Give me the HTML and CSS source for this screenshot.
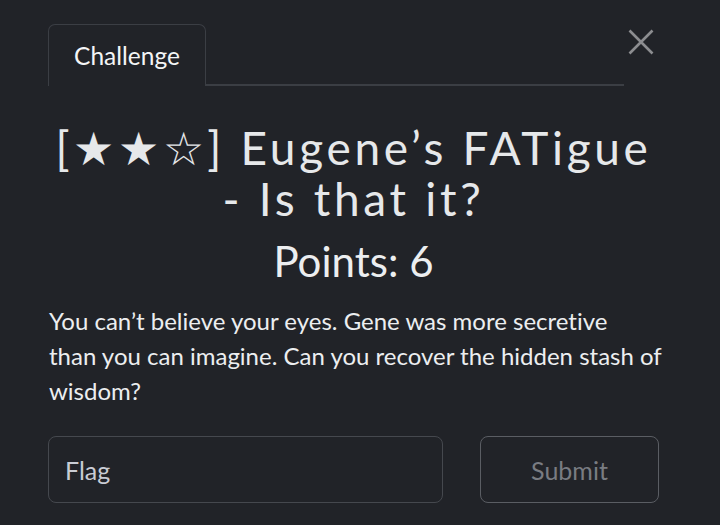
FILE: index.html
```html
<!DOCTYPE html>
<html>
<head>
<meta charset="utf-8">
<link rel="stylesheet" href="styles.css">
</head>
<body>
<div class="modal">
  <div class="header">
    <div class="tabs">
      <div class="tab">Challenge</div>
      <div class="tab-line"></div>
    </div>
    <button class="close" aria-label="Close">
      <svg width="26" height="26" viewBox="0 0 26 26"><path d="M1.5 1.5 L24.5 24.5 M24.5 1.5 L1.5 24.5" stroke="#8c8d90" stroke-width="2.6" fill="none"/></svg>
    </button>
  </div>
  <h2 class="title">[★★☆] Eugene’s FATigue<br>- Is that it?</h2>
  <h3 class="points">Points: 6</h3>
  <p class="desc">You can’t believe your eyes. Gene was more secretive<br>than you can imagine. Can you recover the hidden stash of wisdom?</p>
  <div class="form">
    <div class="input">Flag</div>
    <div class="submit">Submit</div>
  </div>
</div>
</body>
</html>
```
FILE: styles.css
```css
html, body {
  margin: 0;
  padding: 0;
  background: #212328;
  height: 100%;
}
body {
  font-family: Lato, "Noto Sans", sans-serif;
  color: #eceef0;
  font-variant-ligatures: none;
}
.modal {
  width: 611px;
  padding: 24px 0 0 48px;
}
.header {
  display: flex;
  align-items: flex-start;
}
.tabs {
  display: flex;
  align-items: flex-end;
  width: 576px;
}
.tab {
  height: 61px;
  width: 156px;
  border: 1px solid #3b3e44;
  border-bottom: none;
  border-radius: 7px 7px 0 0;
  display: flex;
  align-items: center;
  justify-content: center;
  font-size: 24.5px;
  color: #f4f5f6;
  box-sizing: content-box;
}
.tab-line {
  flex: 1;
  height: 2px;
  background: #3b3e44;
}
.close {
  margin-left: 4px;
  margin-top: 5px;
  background: none;
  border: none;
  padding: 0;
  width: 26px;
  height: 26px;
  display: flex;
}
.title {
  margin: 36px 0 0 0;
  text-align: center;
  font-weight: 400;
  font-size: 46px;
  line-height: 51px;
  letter-spacing: 3.7px;
  color: #e6e8ea;
}
.points {
  margin: 11px 0 0 0;
  text-align: center;
  font-weight: 400;
  font-size: 42px;
  line-height: 52px;
  color: #eceef0;
}
.desc {
  margin: 16px -8px 0 1px;
  font-size: 24px;
  line-height: 35px;
  color: #eceef0;
}
.form {
  display: flex;
  gap: 37px;
  margin-top: 28px;
}
.input, .submit {
  height: 67px;
  box-sizing: border-box;
  border: 1px solid #45484e;
  border-radius: 8px;
  display: flex;
  align-items: center;
  font-size: 25px;
}
.input {
  width: 395px;
  padding-left: 16px;
  color: #c9ccd4;
}
.submit {
  width: 179px;
  justify-content: center;
  border-color: #5a5d63;
  color: #797c82;
}
```
